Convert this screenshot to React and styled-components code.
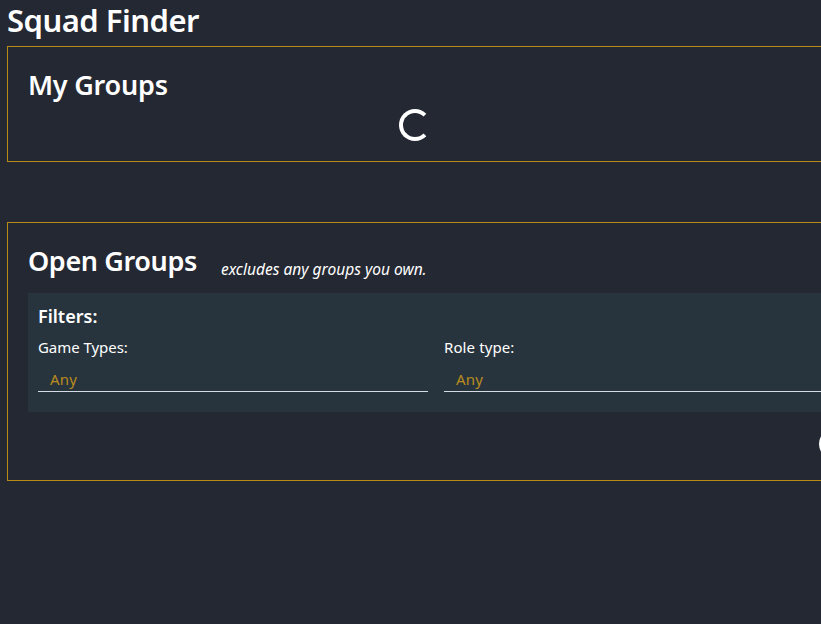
import React from "react";
import styled, { createGlobalStyle } from "styled-components";

const GlobalStyle = createGlobalStyle`
  *, *::before, *::after { box-sizing: border-box; }
  body {
    margin: 0;
    background: #242832;
    color: #fff;
    font-family: "Segoe UI", "Noto Sans", "Open Sans", sans-serif;
    font-size: 15px;
    overflow: hidden;
  }
`;

const Page = styled.main`
  height: 624px;
  padding-left: 7px;
  overflow: hidden;
`;

const PageTitle = styled.h1`
  margin: 0;
  height: 46px;
  font-size: 31px;
  line-height: 40px;
  font-weight: 600;
  letter-spacing: -0.5px;
`;

const Panel = styled.section`
  width: 1656px;
  height: ${(p) => p.$height}px;
  margin-bottom: 60px;
  padding: 20px;
  border: 1px solid #b88b16;
`;

const PanelHeader = styled.header`
  display: flex;
  align-items: flex-start;
  gap: 24px;
  height: ${(p) => p.$height}px;
`;

const PanelTitle = styled.h2`
  margin: 0;
  font-size: 27px;
  line-height: 36px;
  font-weight: 600;
  letter-spacing: ${(p) => p.$tracking}px;
`;

const Note = styled.em`
  padding-top: 15px;
  font-size: 15.5px;
  line-height: 22px;
  letter-spacing: 0.02px;
`;

const SpinnerRow = styled.div`
  display: flex;
  justify-content: center;
  width: ${(p) => p.$width};
  padding-top: ${(p) => p.$top}px;
`;

const Spinner = styled.div`
  width: 32px;
  height: 32px;
  border: 4px solid #fff;
  border-right-color: transparent;
  border-radius: 50%;
`;

const Filters = styled.div`
  height: 119px;
  padding: 10px;
  background: #28343d;
`;

const FiltersTitle = styled.h3`
  margin: 0;
  font-size: 18px;
  line-height: 26px;
  font-weight: 600;
`;

const FilterGrid = styled.div`
  display: grid;
  grid-template-columns: repeat(4, 390px);
  column-gap: 16px;
  padding-top: 7px;
`;

const Field = styled.div`
  display: flex;
  flex-direction: column;
`;

const Label = styled.label`
  line-height: 22px;
  letter-spacing: ${(p) => p.$tracking}px;
`;

const SelectBox = styled.div`
  height: 34px;
  padding: 10px 12px 0;
  border-bottom: 1px solid #d5dbe3;
  color: #b88b20;
  line-height: 22px;
  letter-spacing: 0.2px;
`;

export default function App() {
  return (
    <>
      <GlobalStyle />
      <Page>
        <PageTitle>Squad Finder</PageTitle>
        <Panel $height={116}>
          <PanelHeader $height={42}>
            <PanelTitle $tracking={-0.22}>My Groups</PanelTitle>
          </PanelHeader>
          <SpinnerRow $width="774px" $top={0}>
            <Spinner />
          </SpinnerRow>
        </Panel>
        <Panel $height={259}>
          <PanelHeader $height={50}>
            <PanelTitle $tracking={-0.38}>Open Groups</PanelTitle>
            <Note>excludes any groups you own.</Note>
          </PanelHeader>
          <Filters>
            <FiltersTitle>Filters:</FiltersTitle>
            <FilterGrid>
              <Field>
                <Label $tracking={-0.05}>Game Types:</Label>
                <SelectBox>Any</SelectBox>
              </Field>
              <Field>
                <Label $tracking={0.1}>Role type:</Label>
                <SelectBox>Any</SelectBox>
              </Field>
            </FilterGrid>
          </Filters>
          <SpinnerRow $width="100%" $top={16}>
            <Spinner />
          </SpinnerRow>
        </Panel>
      </Page>
    </>
  );
}
